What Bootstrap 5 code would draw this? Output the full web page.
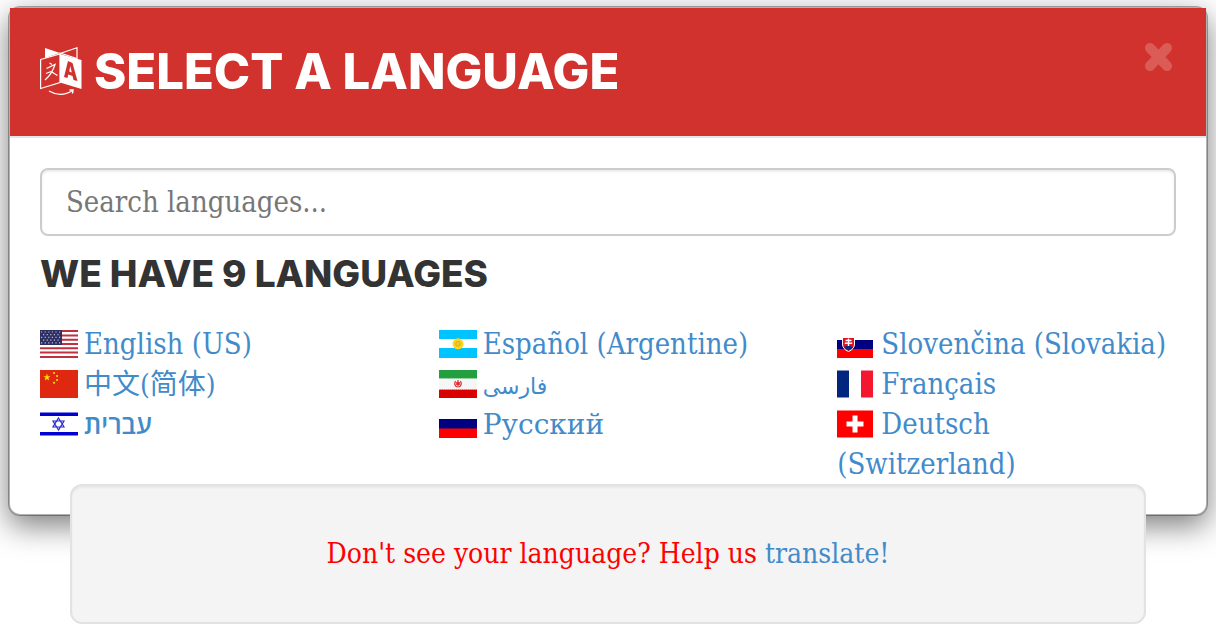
<!DOCTYPE html>
<html lang="en">
<head>
<meta charset="utf-8">
<meta name="viewport" content="width=device-width, initial-scale=1">
<title>Select a language</title>
<link rel="stylesheet" href="https://cdn.jsdelivr.net/npm/bootstrap@5.3.0/dist/css/bootstrap.min.css">
<style>
  body { font-family: "DejaVu Serif Condensed", "DejaVu Serif", "Noto Sans CJK SC", serif; font-size: 28px; line-height: 40px; color: #333; background: #fff; }
  .lang-dialog { margin: 6px 8px 0; }
  .lang-panel { border: 2px solid rgba(0,0,0,.3); border-radius: 12px; background: #fff; background-clip: padding-box; box-shadow: 0 10px 30px rgba(0,0,0,.5); }
  .lang-header { background: #d2322d; border-bottom: 2px solid #e5e5e5; padding: 30px; }
  .lang-title, .lang-count { font-family: Inter, sans-serif; font-weight: 800; text-transform: uppercase; margin: 0; }
  .lang-title { font-size: 49px; line-height: 68px; color: #fff; gap: 12px; }
  .lang-close { border: 0; background: none; padding: 4px 3px; line-height: 0; opacity: .2; }
  .lang-body { padding: 30px; }
  .lang-search { font-size: 29px; line-height: 40px; padding: 12px 24px; border: 2px solid #ccc; border-radius: 8px; box-shadow: inset 0 2px 2px rgba(0,0,0,.075); color: #555; }
  .lang-search::placeholder { color: #777; }
  .lang-count { font-size: 37px; line-height: 40px; margin: 18px 0 30px; }
  .lang-columns { --bs-gutter-x: 60px; font-size: 29px; }
  .lang-columns li { line-height: 40px; }
  .lang-columns svg { width: 38px; height: 28px; margin-right: 6px; vertical-align: -4px; }
  .lang-columns a, .lang-help a { color: #428bca; text-decoration: none; }
  .lang-columns a:lang(zh) { font-size: 28px; line-height: 1; }
  .lang-columns a:lang(fa) { font-family: "DejaVu Sans", sans-serif; font-size: 22px; line-height: 1; }
  .lang-columns a:lang(he) { font-family: "Open Sans", "DejaVu Sans", sans-serif; font-size: 26px; font-weight: 600; line-height: 1; }
  .lang-columns a:lang(ru) { font-family: "DejaVu Serif", serif; font-size: 28px; line-height: 1; }
  .lang-help { margin: -32px 62px 12px; padding: 48px 38px; background: #f4f4f4; border: 2px solid #e2e2e2; border-radius: 12px; box-shadow: inset 0 2px 2px rgba(0,0,0,.05); color: #f00; }
</style>
</head>
<body>
<main class="lang-dialog" role="dialog" aria-labelledby="dialog-title">
  <div class="lang-panel">
    <header class="lang-header d-flex justify-content-between align-items-start">
      <h1 class="lang-title d-flex align-items-center" id="dialog-title">
        <svg width="42" height="50" viewBox="0 0 42 50" fill="none" stroke="#fff" aria-hidden="true">
          <path d="M5 1L20 6L5 11Z" fill="#fff" stroke="none"/>
          <path d="M20 6.500L37 .8V11.500L20 6Z" stroke-width="1.200"/>
          <path d="M.6 12.500L20 7V35.500L.6 41.500Z" stroke-width="1.200"/>
          <path fill-rule="evenodd" d="M20 7L41.500 13V42L20 35.500ZM28 14L24 30L27.500 31L28.300 27.500L32.500 29L33.500 33L37.500 34L32.500 16ZM30.300 19L31.800 25.500L29.200 24.500Z" fill="#fff" stroke="none"/>
          <path d="M9.500 16L12 17.500M6.500 21.500L15 17.500Q12 27 5 33M6 26.500L11 24.500M11 24.500L17.500 28.500" stroke-width="1.200"/>
          <path d="M9 44Q21 51 32.500 43.500M29.500 43L33 43L32.500 46.500" stroke-width="1.400"/>
        </svg>
        <span>Select a language</span>
      </h1>
      <button class="lang-close" type="button" aria-label="Close">
        <svg width="28" height="30" viewBox="0 0 28 30"><path d="M5 6L22 24M22 6L5 24" stroke="#fff" stroke-width="10" stroke-linecap="round"/></svg>
      </button>
    </header>
    <div class="lang-body">
      <input class="form-control lang-search" type="text" placeholder="Search languages..." aria-label="Search languages">
      <h2 class="lang-count">We have 9 languages</h2>
      <div class="row row-cols-3 lang-columns">
        <ul class="list-unstyled col mb-0">
          <li><svg viewBox="0 0 38 28" aria-hidden="true"><path fill="#fff" d="M0 0H38V28H0Z"/><path stroke="#bf3040" stroke-width="2" d="M0 1H38M0 5.500H38M0 9.700H38M0 14H38M0 18.300H38M0 22.500H38M0 27H38"/><path fill="#2d2f62" d="M0 0H22V15H0Z"/><path stroke="#b9bcd2" stroke-width="1.200" stroke-dasharray="1.200 2.400" d="M1 2H21M3 4.700H21M1 7.400H21M3 10.100H21M1 12.800H21"/></svg><a href="#en">English (US)</a></li>
          <li><svg viewBox="0 0 38 28" aria-hidden="true"><path fill="#de2910" d="M0 0H38V28H0Z"/><path fill="#ffde00" d="M7 3.500L7.900 6.200H10.600L8.400 7.800L9.200 10.500L7 8.900L4.800 10.500L5.600 7.800L3.400 6.200H6.100Z"/><path stroke="#ffde00" stroke-width="2" stroke-linecap="round" d="M14 3h.1M17 6h.1M17 10h.1M14 12.700h.1"/></svg><a href="#zh" lang="zh">中文(简体)</a></li>
          <li><svg viewBox="0 0 38 28" aria-hidden="true"><path fill="#fff" d="M0 2H38V26H0Z"/><path stroke="#0000d0" stroke-width="3.500" d="M0 4.300H38M0 23.700H38"/><path fill="none" stroke="#2a2acb" stroke-width="1.200" d="M18.500 8L24 17H13ZM18.500 20L13 11H24Z"/></svg><a href="#he" lang="he">עברית</a></li>
        </ul>
        <ul class="list-unstyled col mb-0">
          <li><svg viewBox="0 0 38 28" aria-hidden="true"><path fill="#fff" d="M0 0H38V28H0Z"/><path fill="#00c4ff" d="M0 0H38V9H0ZM0 18H38V28H0Z"/><circle cx="19" cy="13.800" r="5.500" fill="#ffd51c"/><circle cx="19" cy="13.800" r="2.500" fill="#f4c430" stroke="#c99d18" stroke-width=".6"/></svg><a href="#es">Español (Argentine)</a></li>
          <li><svg viewBox="0 0 38 28" aria-hidden="true"><path fill="#f6f6f6" d="M0 0H38V28H0Z"/><path fill="#239f40" d="M0 0H38V8.500H0Z"/><path fill="#da0000" d="M0 19.500H38V28H0Z"/><path stroke="#a6d5b0" stroke-dasharray="1 1" d="M0 8.500H38"/><path stroke="#eea0a0" stroke-dasharray="1 1" d="M0 19.500H38"/><path fill="none" stroke="#dc3030" stroke-width="1.200" d="M19 10V17.500M16.500 11Q14.500 15 18 17M21.500 11Q23.500 15 20 17M17.800 12V15M20.200 12V15"/></svg><a href="#fa" lang="fa">فارسی</a></li>
          <li><svg viewBox="0 0 38 28" aria-hidden="true"><path fill="#fff" d="M0 0H38V10H0Z"/><path fill="#000080" d="M0 9H38V19H0Z"/><path fill="#f00" d="M0 18.500H38V28H0Z"/></svg><a href="#ru" lang="ru">Русский</a></li>
        </ul>
        <ul class="list-unstyled col mb-0">
          <li class="text-nowrap"><svg viewBox="0 0 38 28" aria-hidden="true"><path fill="#fff" d="M0 0H36V10H0Z"/><path fill="#000080" d="M0 10H36V19H0Z"/><path fill="#f00" d="M0 19H36V28H0Z"/><path fill="#e01020" stroke="#fff" d="M5.500 7.500H17.500V14Q17.500 19 11.500 21.500Q5.500 19 5.500 14Z"/><path fill="#0b2a80" d="M7 17.500Q9 15 11.500 16Q14 15 16 17.500L11.500 20.500Z"/><path stroke="#fff" stroke-width="1.400" d="M11.500 8.500V16M8.500 10.500H14.500M7.800 13.300H15.200"/></svg><a href="#sk">Slovenčina (Slovakia)</a></li>
          <li><svg viewBox="0 0 38 28" aria-hidden="true"><path fill="#fff" d="M0 0H36V28H0Z"/><path fill="#00267f" d="M0 .5H12V27.500H0Z"/><path fill="#f31830" d="M24 .5H36V27.500H24Z"/></svg><a href="#fr">Français</a></li>
          <li><svg viewBox="0 0 38 28" aria-hidden="true"><path fill="#f00" d="M0 .5H36V27.500H0Z"/><path fill="#fff" d="M15.500 5.500H20.500V11.500H26.500V16.500H20.500V22.500H15.500V16.500H9.500V11.500H15.500Z"/></svg><a href="#de">Deutsch <br>(Switzerland)</a></li>
        </ul>
      </div>
    </div>
  </div>
  <p class="lang-help position-relative text-center">Don't see your language? Help us <a href="#translate">translate!</a></p>
</main>
<script src="https://cdn.jsdelivr.net/npm/bootstrap@5.3.0/dist/js/bootstrap.bundle.min.js"></script>
</body>
</html>
